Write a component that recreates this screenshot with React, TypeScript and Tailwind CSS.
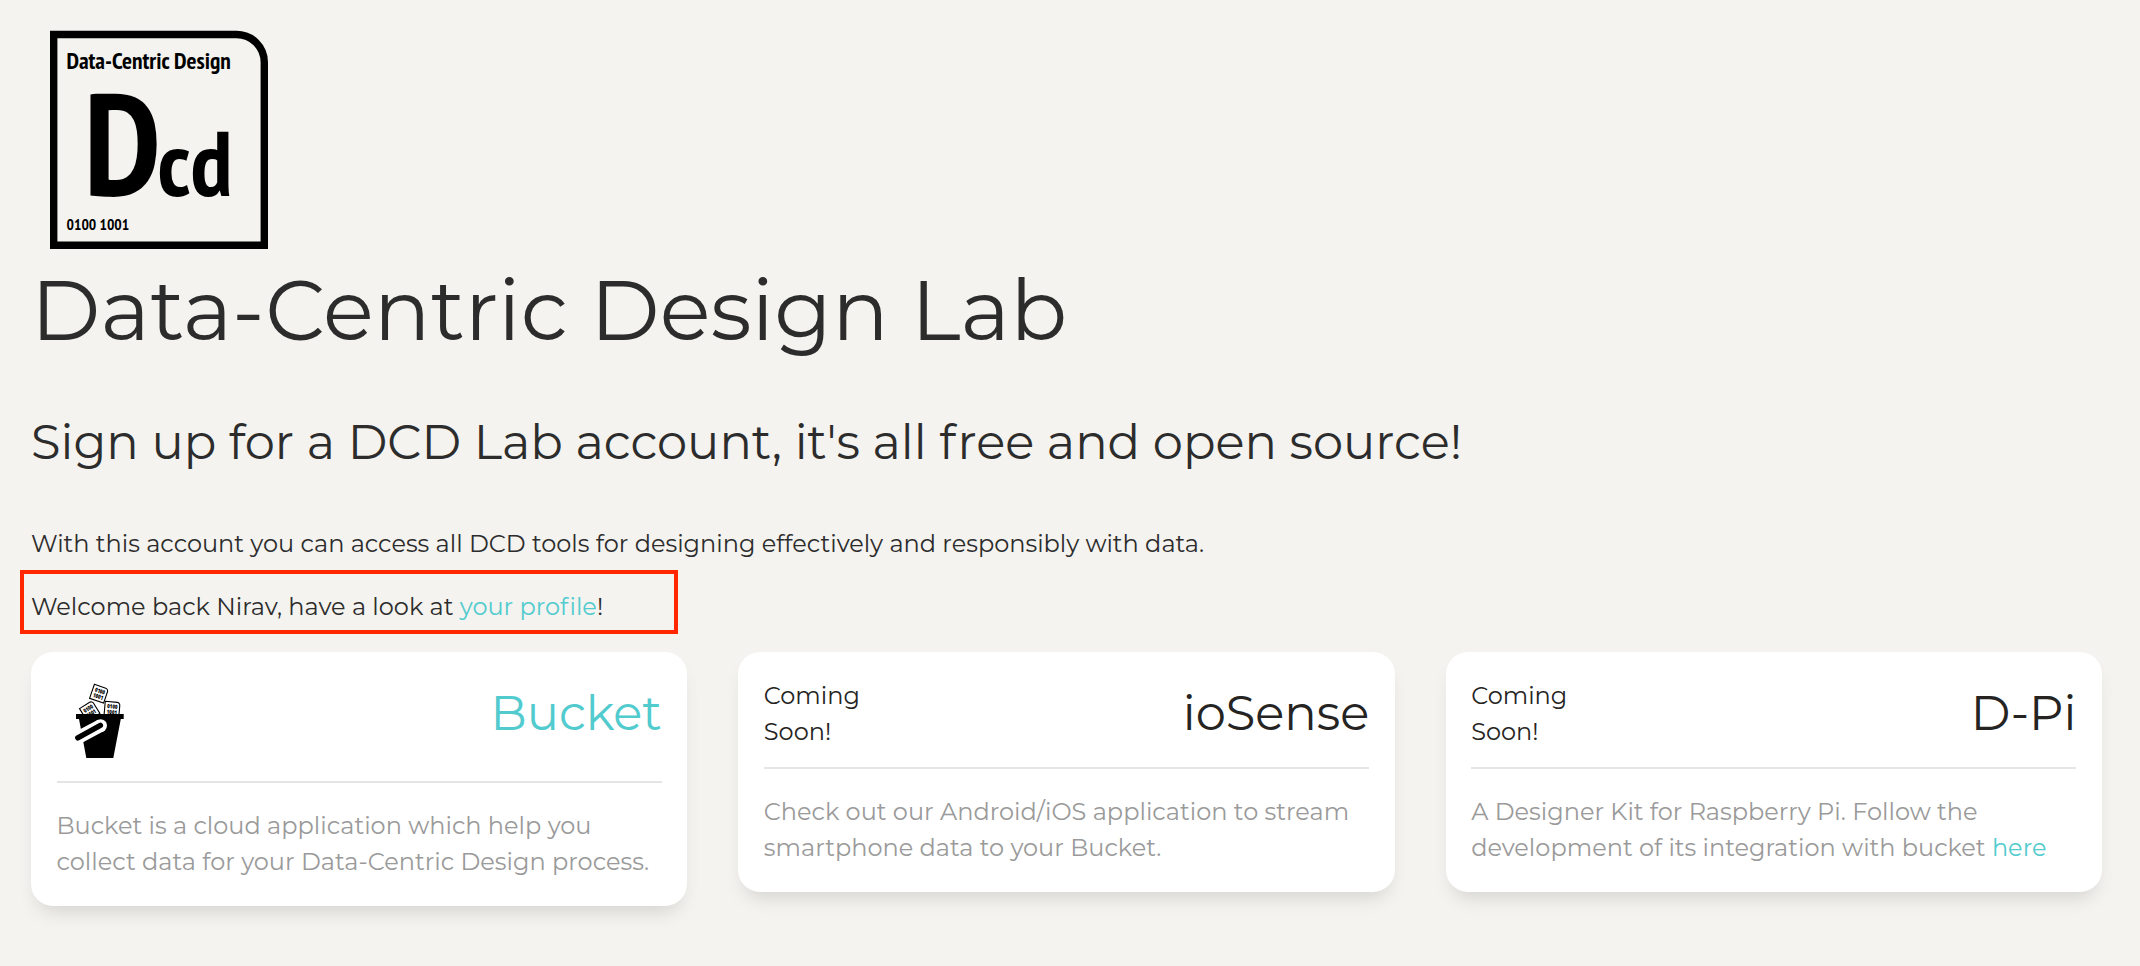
import type { ReactNode } from "react";

const LOGO_FONT = "'PT Sans Narrow', 'Open Sans', 'Noto Sans', sans-serif";

function Logo() {
  return (
    <svg className="ml-[19px] block h-[219px] w-[218px]" viewBox="50 30 218 219" fill="none" aria-label="Data-Centric Design">
      <path d="M53.7 34.5H236.5A27.8 27.8 0 0 1 264.3 62.3V245.3H53.7Z" stroke="#000" strokeWidth="7.4" />
      <g fill="#000" fontFamily={LOGO_FONT} fontWeight="700">
        <text x="66.4" y="68.8" fontSize="22.9" textLength="164.4" lengthAdjust="spacingAndGlyphs">Data-Centric Design</text>
        <text x="84" y="196.3" fontSize="144" textLength="77" lengthAdjust="spacingAndGlyphs">D</text>
        <text x="157.4" y="196.3" fontSize="92" textLength="75" lengthAdjust="spacingAndGlyphs">cd</text>
        <text x="66.6" y="230.2" fontSize="15.5" textLength="62.6" lengthAdjust="spacingAndGlyphs">0100 1001</text>
      </g>
    </svg>
  );
}

function Sheet({ x, y, angle }: { x: number; y: number; angle: number }) {
  return (
    <g transform={`translate(${x} ${y}) rotate(${angle})`}>
      <path d="M-7.4 -7.4H4.6A2.8 2.8 0 0 1 7.4 -4.6V7.4H-7.4Z" fill="#fff" stroke="#000" strokeWidth="1.1" />
      <g fill="#000" fontFamily="'Open Sans', sans-serif" fontWeight="800" fontSize="5.8">
        <text x="-5.1" y="-0.8" textLength="10.4" lengthAdjust="spacingAndGlyphs">0100</text>
        <text x="-5.1" y="4.9" textLength="10.4" lengthAdjust="spacingAndGlyphs">1001</text>
      </g>
    </g>
  );
}

function BucketIcon() {
  return (
    <svg className="mb-[3px] ml-[16.5px] mt-[3px] block h-[80px] w-[56px]" viewBox="73 681 56 80" fill="none" aria-hidden="true">
      <Sheet x={99} y={693.7} angle={19} />
      <Sheet x={89.7} y={711} angle={-32} />
      <Sheet x={112} y={709.3} angle={5} />
      <path d="M76 714H123.7V719H120.8L113.3 758H86.3L79 719H76Z" fill="#000" />
      <path d="M73 740.3L101 725.3" stroke="#fff" strokeWidth="12.8" />
      <circle cx="100.6" cy="725.6" r="6.4" fill="#fff" />
      <path d="M77.8 737.8L100.4 725.4" stroke="#000" strokeWidth="5.4" strokeLinecap="round" />
    </svg>
  );
}

function Card({ lead, title, children }: { lead: ReactNode; title: ReactNode; children: ReactNode }) {
  return (
    <section className="rounded-[22px] bg-white px-[25.5px] py-[26px] shadow-[0_12px_20px_-8px_rgba(0,0,0,0.15)]">
      <div className="flex items-start justify-between">
        {lead}
        <h3 className="pt-[5px] text-5xl leading-[60px]">{title}</h3>
      </div>
      <hr className="mb-[25px] mt-[17px] border-t-2 border-[#e5e5e5]" />
      <div className="tracking-[0.01px] text-[#9a9a9a]">{children}</div>
    </section>
  );
}

function ComingSoon() {
  return (
    <div>
      Coming
      <br />
      Soon!
    </div>
  );
}

export default function App() {
  return (
    <main className="min-h-screen overflow-hidden bg-[#f4f3ef] pl-[31px] pr-[38px] pt-[30px] font-['Montserrat','Inter','Open_Sans',sans-serif] text-2xl font-normal leading-[36px] whitespace-nowrap text-[#252422]">
      <Logo />
      <h1 className="mt-[11px] text-[84px] leading-[100px] tracking-[0.1px] text-[#2c2c2c]">Data-Centric Design Lab</h1>
      <h2 className="mt-[52px] text-5xl leading-[60px] tracking-[0.02px] text-[#2c2c2c]">
        Sign up for a DCD Lab account, it's all <span className="tracking-[2px]">f</span>ree and open source!
      </h2>
      <p className="mt-[54px] leading-[36px] text-[#2c2c2c]">
        With this account you can access all DCD tools for designing effectively and responsibly with data.
      </p>
      <p className="relative mt-[27px] leading-[36px] text-[#2c2c2c]">
        Welcome back Nirav, have a look at{" "}
        <a className="text-[#51cbce]">
          your pro<span className="tracking-[1.2px]">f</span>ile
        </a>
        !
        <span className="absolute -left-[11px] -top-[19px] h-[64px] w-[658px] border-4 border-[#ff2600]" />
      </p>
      <div className="mt-[27px] grid grid-cols-3 items-start gap-[51px] leading-[36px]">
        <Card lead={<BucketIcon />} title={<a className="text-[#51cbce]">Bucket</a>}>
          Bucket is a cloud application which help you
          <br />
          collect data for your Data-Centric Design process.
        </Card>
        <Card lead={<ComingSoon />} title="ioSense">
          Check out our Android/iOS application to stream
          <br />
          smartphone data to your Bucket.
        </Card>
        <Card lead={<ComingSoon />} title="D-Pi">
          A Designer Kit for Raspberry Pi. Follow the
          <br />
          development of its integration with bucket <a className="text-[#51cbce]">here</a>
        </Card>
      </div>
    </main>
  );
}
